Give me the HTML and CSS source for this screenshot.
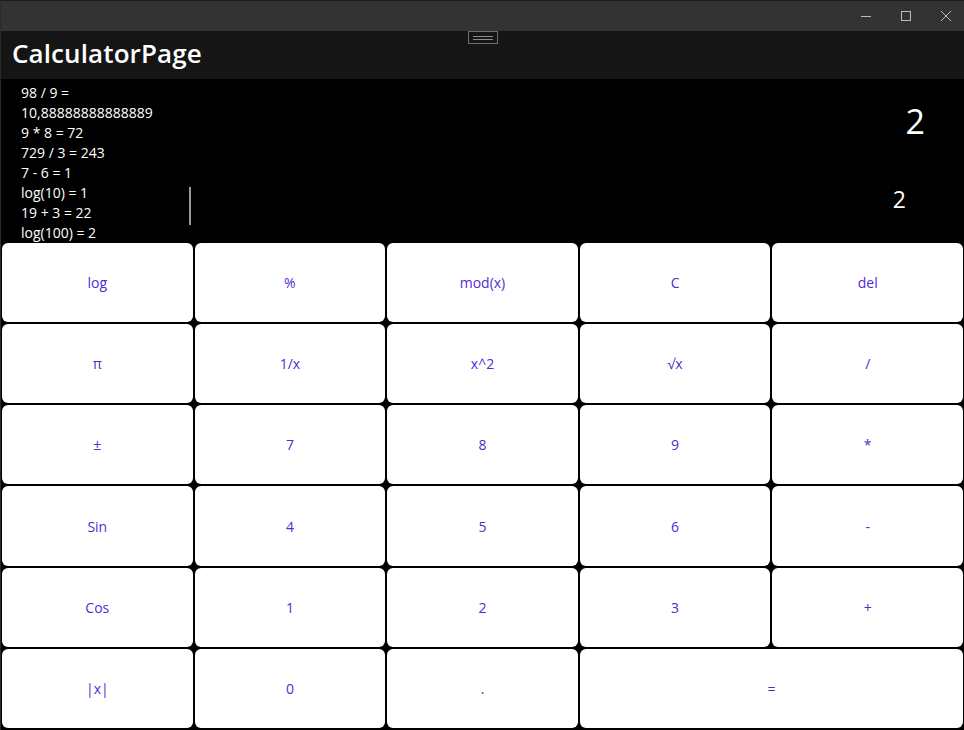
FILE: index.html
```html
<!DOCTYPE html>
<html lang="en">
<head>
    <meta charset="UTF-8">
    <meta name="viewport" content="width=device-width, initial-scale=1.0">
    <title>CalculatorPage</title>
    <link rel="stylesheet" href="styles.css">
</head>
<body>
    <div class="window">
        <div class="titlebar">
            <div class="controls">
                <span class="ctl">
                    <svg width="10" height="10" viewBox="0 0 10 10"><path d="M0 5.5h10" stroke="#bbb" stroke-width="1"/></svg>
                </span>
                <span class="ctl">
                    <svg width="10" height="10" viewBox="0 0 10 10"><rect x="0.5" y="0.5" width="9" height="9" fill="none" stroke="#bbb" stroke-width="1"/></svg>
                </span>
                <span class="ctl">
                    <svg width="10" height="10" viewBox="0 0 10 10"><path d="M0 0L10 10M10 0L0 10" stroke="#bbb" stroke-width="1"/></svg>
                </span>
            </div>
        </div>
        <div class="header">
            <h1>CalculatorPage</h1>
            <div class="handle"><i></i><i></i></div>
        </div>

        <div class="display">
            <ul class="history">
                <li>98 / 9 =</li>
                <li>10,88888888888889</li>
                <li>9 * 8 = 72</li>
                <li>729 / 3 = 243</li>
                <li>7 - 6 = 1</li>
                <li>log(10) = 1</li>
                <li>19 + 3 = 22</li>
                <li>log(100) = 2</li>
            </ul>
            <div class="scrollbar"></div>
            <div class="results">
                <div class="current">2</div>
                <div class="previous">2</div>
            </div>
        </div>

        <div class="keypad">
            <button>log</button>
            <button>%</button>
            <button>mod(x)</button>
            <button>C</button>
            <button>del</button>

            <button>π</button>
            <button>1/x</button>
            <button>x^2</button>
            <button>√x</button>
            <button>/</button>

            <button>±</button>
            <button>7</button>
            <button>8</button>
            <button>9</button>
            <button>*</button>

            <button>Sin</button>
            <button>4</button>
            <button>5</button>
            <button>6</button>
            <button>-</button>

            <button>Cos</button>
            <button>1</button>
            <button>2</button>
            <button>3</button>
            <button>+</button>

            <button>|x|</button>
            <button>0</button>
            <button>.</button>
            <button class="wide">=</button>
        </div>
    </div>
</body>
</html>
```

FILE: styles.css
```css
html, body {
    margin: 0;
    padding: 0;
    background: #000;
}
body {
    font-family: "Open Sans", "Noto Sans", sans-serif;
    width: 964px;
    height: 730px;
    overflow: hidden;
}
.window {
    display: flex;
    flex-direction: column;
    height: 730px;
    border-left: 1px solid #2a2a2a;
    box-sizing: border-box;
}
.titlebar {
    height: 31px;
    box-sizing: border-box;
    border-top: 1px solid #1c1c1c;
    background: #333333;
    display: flex;
    justify-content: flex-end;
}
.controls {
    display: flex;
    margin-right: -2px;
}
.ctl {
    width: 40px;
    height: 30px;
    display: flex;
    align-items: center;
    justify-content: center;
}
.header {
    position: relative;
    height: 48px;
    background: #151515;
    display: flex;
    align-items: center;
}
.header h1 {
    margin: -5px 0 0 11px;
    color: #fff;
    font-size: 26px;
    font-weight: 600;
    letter-spacing: 0.1px;
}
.handle {
    position: absolute;
    left: 467px;
    top: 0;
    width: 28px;
    height: 11px;
    border: 1px solid #6e6e6e;
    display: flex;
    flex-direction: column;
    justify-content: center;
    align-items: center;
    gap: 2px;
}
.handle i {
    display: block;
    width: 20px;
    height: 1px;
    background: #8a8a8a;
}
.display {
    position: relative;
    height: 163px;
    background: #000;
    display: flex;
    justify-content: space-between;
    overflow: hidden;
}
.history {
    list-style: none;
    margin: 0;
    padding: 4px 0 0 20px;
    color: #fff;
    font-size: 14px;
    line-height: 20px;
}
.scrollbar {
    position: absolute;
    left: 188px;
    top: 108px;
    width: 2px;
    height: 38px;
    background: #9a9a9a;
}
.results {
    display: flex;
    flex-direction: column;
    align-items: flex-end;
    color: #fff;
}
.current {
    font-size: 34px;
    line-height: 40px;
    margin: 22px 39px 0 0;
}
.previous {
    font-size: 23px;
    line-height: 30px;
    margin: 43px 58px 0 0;
}
.keypad {
    flex: 1;
    display: grid;
    grid-template-columns: repeat(5, 1fr);
    grid-template-rows: repeat(6, 1fr);
    gap: 2px;
    padding: 1px 1px 2px 1px;
    background: #000;
}
.keypad button {
    background: #fff;
    border: none;
    border-radius: 6px;
    color: #512bd4;
    font-family: "Open Sans", "Noto Sans", sans-serif;
    font-size: 14px;
    cursor: pointer;
}
.keypad .wide {
    grid-column: span 2;
}
```
